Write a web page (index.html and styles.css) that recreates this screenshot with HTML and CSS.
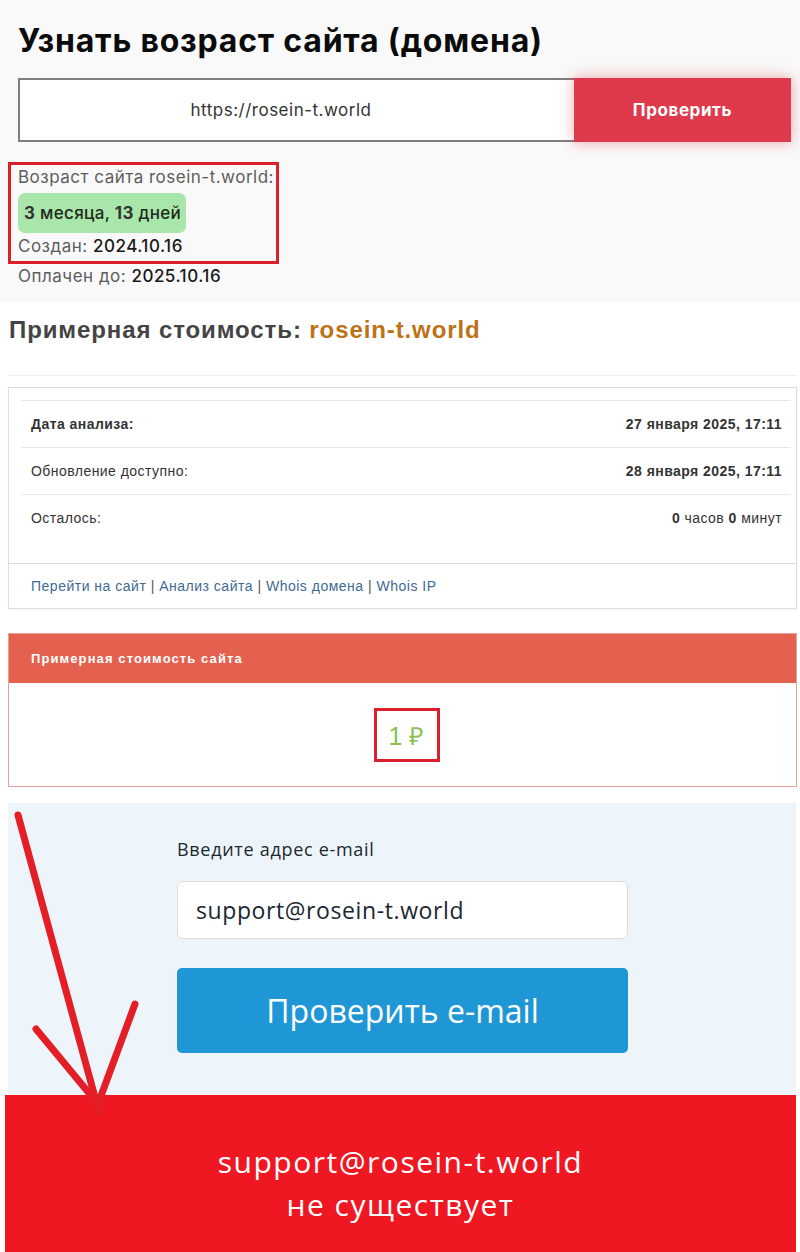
FILE: index.html
```html
<!DOCTYPE html>
<html lang="ru">
<head>
<meta charset="utf-8">
<title>Возраст сайта</title>
<link rel="stylesheet" href="styles.css">
</head>
<body>
<div class="page">
  <section class="s1">
    <h1 class="s1-title">Узнать возраст сайта (домена)</h1>
    <div class="check-row">
      <div class="check-input">https://rosein-t.world</div>
      <div class="check-btn">Проверить</div>
    </div>
    <div class="age-box">
      <div class="age-line">Возраст сайта rosein-t.world:</div>
      <div class="age-pill"><b>3</b> месяца, <b>13</b> дней</div>
      <div class="age-line created">Создан: <span class="val">2024.10.16</span></div>
    </div>
    <div class="age-line">Оплачен до: <span class="val">2025.10.16</span></div>
  </section>

  <section class="s2">
    <h2 class="s2-title">Примерная стоимость: <span class="dom">rosein-t.world</span></h2>
    <div class="s2-hr"></div>
    <div class="panel">
      <div class="panel-body">
        <div class="trow"><span class="b">Дата анализа:</span><span class="b">27 января 2025, 17:11</span></div>
        <div class="trow"><span>Обновление доступно:</span><span class="b">28 января 2025, 17:11</span></div>
        <div class="trow"><span>Осталось:</span><span><b>0</b> часов <b>0</b> минут</span></div>
      </div>
      <div class="panel-foot">
        <a class="lnk">Перейти на сайт</a> | <a class="lnk">Анализ сайта</a> | <a class="lnk">Whois домена</a> | <a class="lnk">Whois IP</a>
      </div>
    </div>
    <div class="cost-panel">
      <div class="cost-head">Примерная стоимость сайта</div>
      <div class="cost-body"><span class="cost-val">1 ₽</span></div>
    </div>
  </section>

  <section class="s3">
    <div class="mail-form">
      <div class="mail-label">Введите адрес e-mail</div>
      <div class="mail-input">support@rosein-t.world</div>
      <div class="mail-btn">Проверить e-mail</div>
    </div>
  </section>
  <section class="s4">
    <div class="res-line">support@rosein-t.world</div>
    <div class="res-line">не существует</div>
  </section>

  <svg class="arrow" width="800" height="1252" viewBox="0 0 800 1252" aria-hidden="true">
    <g stroke="#e41e26" stroke-width="7" stroke-linecap="round" fill="none">
      <line x1="18" y1="815" x2="99" y2="1112"/>
      <line x1="36" y1="1029" x2="98" y2="1104"/>
      <line x1="135" y1="1004" x2="98" y2="1104"/>
    </g>
  </svg>
</div>
</body>
</html>
```

FILE: styles.css
```css
html, body {
  margin: 0;
  padding: 0;
  background: #ffffff;
}
.page {
  position: relative;
  width: 800px;
  height: 1252px;
  overflow: hidden;
}

/* Section 1 */
.s1 {
  background: #f9f9f9;
  padding: 20px 0 0 18px;
  height: 282px;
  font-family: Inter, "Open Sans", sans-serif;
}
.s1-title {
  margin: 0;
  font-size: 32px;
  line-height: 42px;
  font-weight: 700;
  color: #0b0b0b;
  letter-spacing: 0.8px;
}
.check-row {
  display: flex;
  margin-top: 16px;
  width: 773px;
  height: 64px;
}
.check-input {
  box-sizing: border-box;
  width: 556px;
  height: 64px;
  border: 2px solid #7d7d7d;
  border-right: none;
  background: #ffffff;
  display: flex;
  align-items: center;
  justify-content: center;
  padding-right: 32px;
  font-size: 17px;
  letter-spacing: 0.5px;
  color: #333;
}
.check-btn {
  width: 217px;
  height: 64px;
  background: #de3a4b;
  color: #ffffff;
  font-weight: 700;
  font-size: 17px;
  letter-spacing: 0.6px;
  display: flex;
  align-items: center;
  justify-content: center;
  box-shadow: 0 0 14px rgba(230, 60, 75, 0.45);
}
.age-box {
  box-sizing: border-box;
  margin: 20px 0 0 -10px;
  width: 271px;
  height: 102px;
  border: 3px solid #dd1f2b;
  padding: 0 0 0 7px;
}
.age-line {
  font-size: 17px;
  line-height: 24px;
  letter-spacing: 0.5px;
  color: #5d5d5d;
}
.age-line .val {
  color: #1a1a1a;
  font-weight: 500;
}
.age-pill {
  display: inline-block;
  margin-top: 4px;
  background: #a9e6a9;
  border-radius: 7px;
  padding: 0 5px 0 6px;
  height: 40px;
  line-height: 40px;
  font-size: 17px;
  letter-spacing: 0.3px;
  font-weight: 500;
  color: #1e2a1e;
  vertical-align: top;
}
.age-pill b {
  font-weight: 700;
  color: #333;
}
.created {
  margin-top: 1px;
}

/* Section 2 */
.s2 {
  width: 797px;
  padding-top: 12px;
  padding-bottom: 16px;
  background: #ffffff;
  font-family: "Liberation Sans", Arial, sans-serif;
}
.s2-title {
  margin: 0 0 0 9px;
  font-size: 24px;
  line-height: 32px;
  font-weight: 700;
  letter-spacing: 0.9px;
  color: #444444;
}
.s2-title .dom {
  color: #bd7216;
}
.s2-hr {
  margin: 29px 0 0 8px;
  height: 1px;
  background: #f0f0f0;
}
.panel {
  margin: 11px 0 0 8px;
  border: 1px solid #dddddd;
  box-shadow: 0 1px 2px rgba(0,0,0,0.05);
}
.panel-body {
  padding: 12px 6px 22px 12px;
}
.trow {
  display: flex;
  justify-content: space-between;
  align-items: center;
  height: 46px;
  border-top: 1px solid #e8e8e8;
  padding: 0 8px 0 10px;
  font-size: 14px;
  letter-spacing: 0.45px;
  color: #333333;
}
.trow .b, .trow b {
  font-weight: 700;
}
.panel-foot {
  border-top: 1px solid #dddddd;
  height: 44px;
  line-height: 44px;
  padding-left: 22px;
  font-size: 14px;
  letter-spacing: 0.5px;
  color: #555;
}
.lnk {
  color: #3f6a96;
}
.cost-panel {
  margin: 24px 0 0 8px;
  border: 1px solid #e6a198;
}
.cost-head {
  height: 49px;
  line-height: 49px;
  background: #e46150;
  color: #ffffff;
  font-weight: 700;
  font-size: 13px;
  letter-spacing: 1.1px;
  padding-left: 22px;
}
.cost-body {
  height: 103px;
  display: flex;
  align-items: center;
  justify-content: center;
}
.cost-val {
  box-sizing: border-box;
  width: 66px;
  height: 54px;
  border: 3px solid #dd1f2b;
  display: flex;
  align-items: center;
  justify-content: center;
  font-size: 25px;
  color: #8cc152;
  margin-left: 8px;
}

/* Section 3 */
.s3 {
  margin-left: 8px;
  width: 788px;
  height: 292px;
  background: #eef5fa;
  font-family: "Open Sans", "Noto Sans", sans-serif;
}
.mail-form {
  padding: 33px 0 0 169px;
  width: 451px;
}
.mail-label {
  font-size: 18px;
  line-height: 26px;
  letter-spacing: 0.7px;
  color: #1b2733;
}
.mail-input {
  box-sizing: border-box;
  margin-top: 19px;
  height: 58px;
  background: #ffffff;
  border: 1px solid #dcdcdc;
  border-radius: 6px;
  padding-left: 18px;
  display: flex;
  align-items: center;
  font-size: 23px;
  letter-spacing: 0.6px;
  color: #1b2733;
}
.mail-btn {
  margin-top: 29px;
  height: 85px;
  background: #1f97d6;
  border-radius: 5px;
  display: flex;
  align-items: center;
  justify-content: center;
  font-size: 32px;
  color: #ffffff;
}

/* Section 4 */
.s4 {
  margin-left: 5px;
  width: 791px;
  height: 157px;
  background: #ee1722;
  box-sizing: border-box;
  padding-top: 45px;
  font-family: "Open Sans", "Noto Sans", sans-serif;
  text-align: center;
  color: #ffffff;
}
.res-line {
  font-size: 30px;
  line-height: 43px;
  letter-spacing: 1.5px;
}

.arrow {
  position: absolute;
  left: 0;
  top: 0;
  pointer-events: none;
}
```
